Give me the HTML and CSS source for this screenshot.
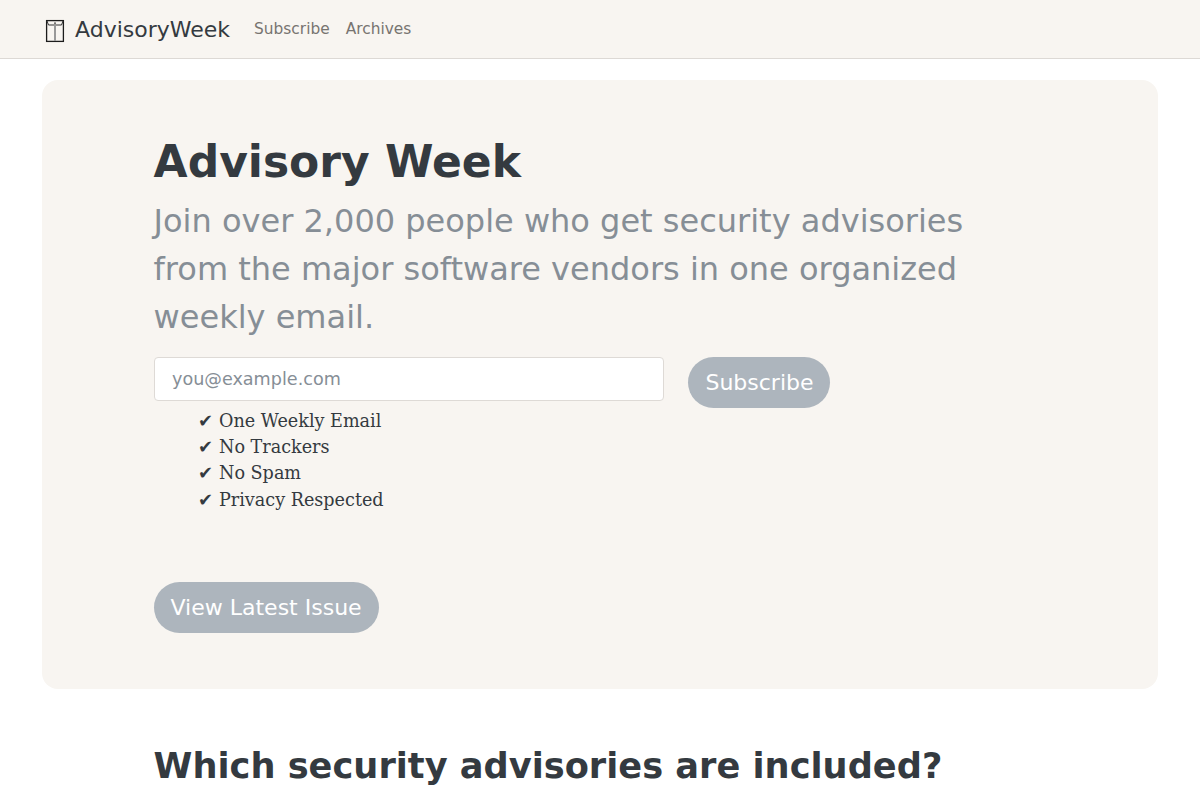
FILE: index.html
```html
<!DOCTYPE html>
<html>
<head>
	<meta charset="utf-8">
	<title>Advisory Week</title>
	<link rel="stylesheet" href="styles.css">
</head>
<body>
	<nav class="navbar">
		<a class="brand" href="#">
			<svg class="brand_icon" width="20" height="24" viewBox="0 0 20 24">
				<rect x="1.6" y="1.6" width="16.8" height="20.8" fill="none" stroke="#1c1c1c" stroke-width="1.3"/>
				<path d="M2 2 L3.5 6 H16.5 L18 2" fill="none" stroke="#333" stroke-width="1"/>
				<rect x="9" y="6" width="2" height="16" fill="#999"/>
				<rect x="9" y="3.6" width="2" height="1" fill="#222"/>
			</svg>
			AdvisoryWeek
		</a>
		<a class="nav_link" href="#">Subscribe</a>
		<a class="nav_link" href="#">Archives</a>
	</nav>
	<div class="container">
		<section class="hero">
			<h1>Advisory Week</h1>
			<p class="lead">Join over 2,000 people who get security advisories from the major software vendors in one organized weekly email.</p>
			<form class="signup">
				<input class="email" type="email" placeholder="you@example.com">
				<button class="pill pill_subscribe" type="button">Subscribe</button>
			</form>
			<ul class="perks">
				<li>One Weekly Email</li>
				<li>No Trackers</li>
				<li>No Spam</li>
				<li>Privacy Respected</li>
			</ul>
			<a class="pill pill_latest" href="#">View Latest Issue</a>
		</section>
		<section class="details">
			<h2>Which security advisories are included?</h2>
		</section>
	</div>
</body>
</html>
```

FILE: styles.css
```css
body {
	margin: 0;
	background-color: #FFFFFF;
	color: #343A40;
	font-family: "DejaVu Sans", sans-serif;
	font-size: 16px;
	line-height: 1.5;
}
a {
	text-decoration: none;
}
.navbar {
	display: flex;
	align-items: center;
	height: 58px;
	padding-left: 42px;
	background-color: #F8F5F1;
	border-bottom: 1px solid #DDD9D5;
}
.brand {
	display: flex;
	align-items: center;
	gap: 10px;
	margin-right: 24px;
	color: #343A40;
	font-size: 22px;
}
.brand_icon {
	margin-left: 3px;
	margin-top: 4px;
}
.nav_link {
	margin-right: 16px;
	padding-top: 1px;
	color: #777470;
	font-size: 15.4px;
}
.container {
	padding: 21px 42px 0;
}
.hero {
	height: 609px;
	box-sizing: border-box;
	padding: 56px 112px 0 111.6px;
	background-color: #F8F5F1;
	border-radius: 16px;
}
h1 {
	margin: 0 0 8px;
	color: #343A40;
	font-size: 44px;
	font-weight: bold;
	line-height: 1.2;
}
.lead {
	width: 840px;
	margin: 0 0 16px;
	color: #868E96;
	font-size: 32px;
	line-height: 48px;
}
.signup {
	display: flex;
	align-items: flex-start;
}
.email {
	width: 510px;
	height: 44px;
	box-sizing: border-box;
	margin-right: 24.4px;
	padding: 0 17.4px;
	background-color: #FFFFFF;
	border: 1px solid #DEDAD6;
	border-radius: 4px;
	font-family: "DejaVu Sans", sans-serif;
	font-size: 17.6px;
}
.email::placeholder {
	color: #868E96;
}
.pill {
	display: inline-block;
	height: 51px;
	box-sizing: border-box;
	background-color: #ADB5BD;
	border: none;
	border-radius: 26px;
	color: #FFFFFF;
	font-family: "DejaVu Sans", sans-serif;
	font-size: 22px;
	line-height: 51px;
}
.pill_subscribe {
	width: 142px;
	padding: 0 0 2px 1px;
}
.pill_latest {
	width: 225px;
	margin-top: 69.3px;
	text-align: center;
}
.perks {
	margin: -0.3px 0 0;
	padding-left: 44.4px;
	list-style: none;
	color: #343A40;
	font-family: "DejaVu Serif", serif;
	font-size: 17.6px;
	line-height: 26.4px;
}
.perks li::before {
	content: "✔";
	margin-right: 6px;
	line-height: 1;
}
.details {
	padding: 0 112px 0 111.6px;
}
h2 {
	margin: 56px 0 0;
	color: #343A40;
	font-size: 35.2px;
	font-weight: bold;
	line-height: 1.2;
}
```
